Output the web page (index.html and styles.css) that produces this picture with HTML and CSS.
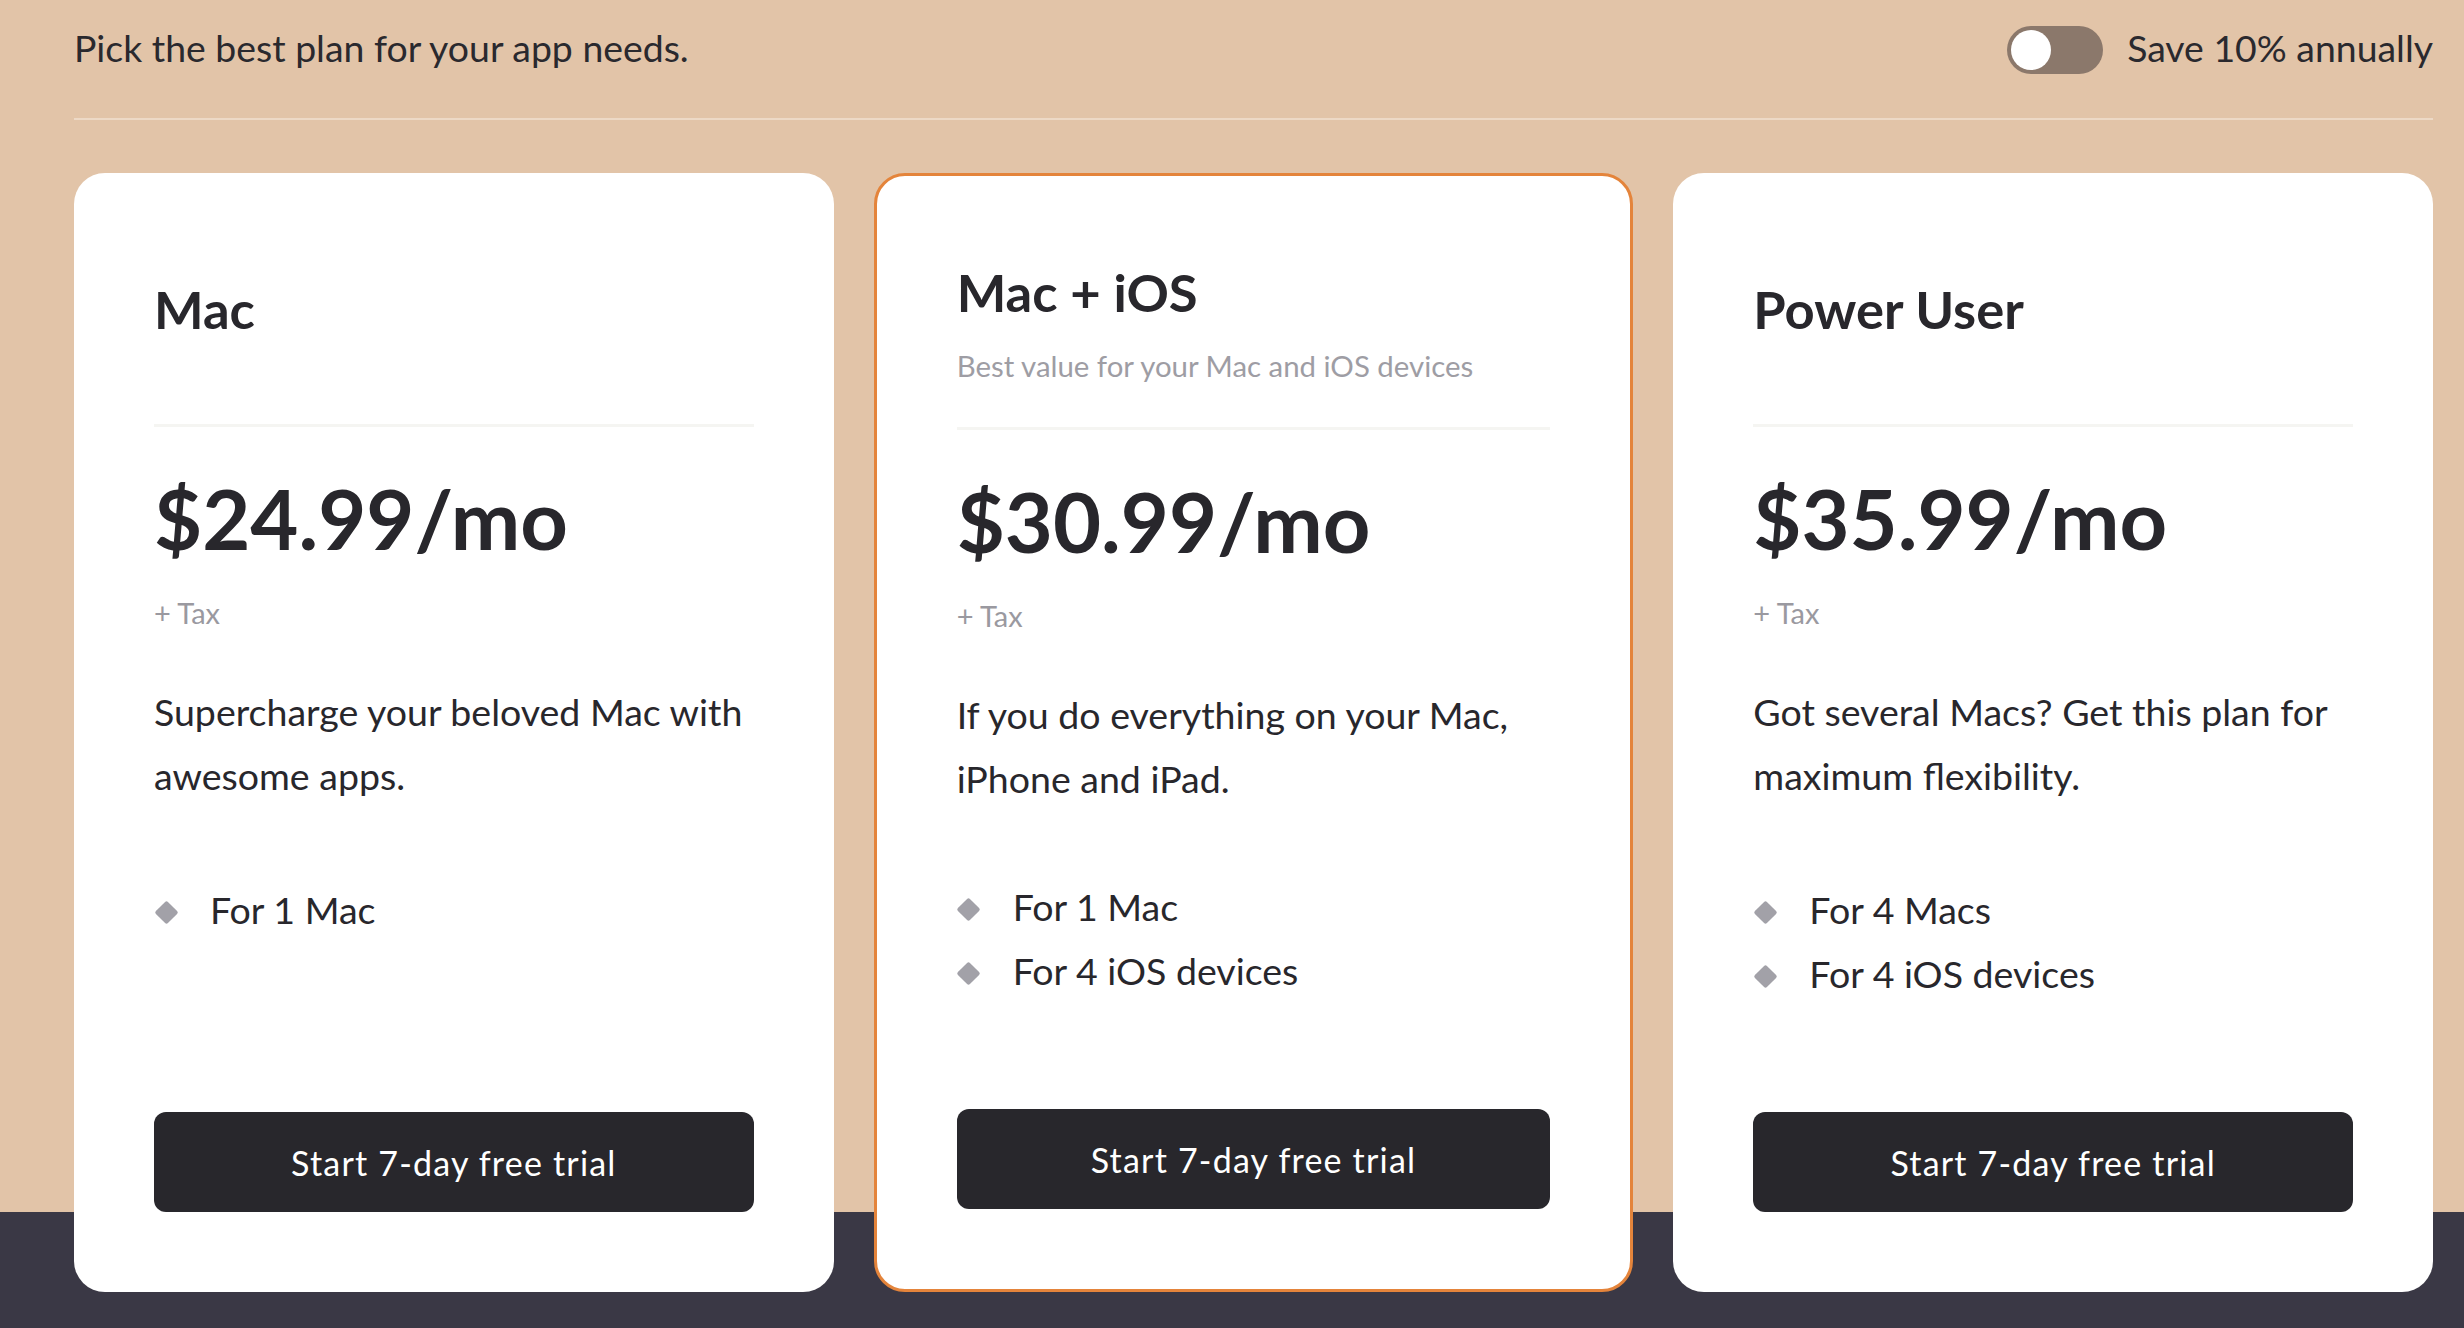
FILE: index.html
```html
<!DOCTYPE html>
<html lang="en">
<head>
<meta charset="utf-8">
<title>Plans</title>
<link rel="stylesheet" href="styles.css">
</head>
<body>
<div class="page">
  <header class="top">
    <p class="lead">Pick the best plan for your app needs.</p>
    <div class="billing">
      <span class="switch" role="switch" aria-checked="false"><span class="knob"></span></span>
      <span class="billing-label">Save 10% annually</span>
    </div>
  </header>

  <section class="plans">
    <article class="card">
      <div class="card-head">
        <h2 class="plan-name">Mac</h2>
      </div>
      <div class="rule"></div>
      <div class="price">$24.99/mo</div>
      <div class="tax">+ Tax</div>
      <p class="desc">Supercharge your beloved Mac with awesome apps.</p>
      <ul class="features">
        <li>For 1 Mac</li>
      </ul>
      <button class="cta" type="button">Start 7-day free trial</button>
    </article>

    <article class="card featured">
      <div class="card-head">
        <h2 class="plan-name">Mac + iOS</h2>
        <p class="plan-sub">Best value for your Mac and iOS devices</p>
      </div>
      <div class="rule"></div>
      <div class="price">$30.99/mo</div>
      <div class="tax">+ Tax</div>
      <p class="desc">If you do everything on your Mac, iPhone and iPad.</p>
      <ul class="features">
        <li>For 1 Mac</li>
        <li>For 4 iOS devices</li>
      </ul>
      <button class="cta" type="button">Start 7-day free trial</button>
    </article>

    <article class="card">
      <div class="card-head">
        <h2 class="plan-name">Power User</h2>
      </div>
      <div class="rule"></div>
      <div class="price">$35.99/mo</div>
      <div class="tax">+ Tax</div>
      <p class="desc">Got several Macs? Get this plan for maximum flexibility.</p>
      <ul class="features">
        <li>For 4 Macs</li>
        <li>For 4 iOS devices</li>
      </ul>
      <button class="cta" type="button">Start 7-day free trial</button>
    </article>
  </section>
</div>
</body>
</html>
```
FILE: styles.css
```css
* {
  box-sizing: border-box;
}

html, body {
  margin: 0;
  padding: 0;
}

body {
  font-family: "Lato", "Noto Sans", sans-serif;
  color: #28272c;
  background: #3a3845;
}

.page {
  min-height: 1328px;
  padding: 0 31px 0 74px;
  background: linear-gradient(to bottom, #e2c4a8 0, #e2c4a8 1212px, #3a3845 1212px, #3a3845 100%);
}

/* ---------- header ---------- */
.top {
  display: flex;
  align-items: center;
  justify-content: space-between;
  padding-top: 26px;
  padding-bottom: 44px;
  border-bottom: 2px solid #edd9c6;
}

.lead,
.billing-label {
  margin: 0;
  font-size: 37.4px;
  line-height: 44px;
  padding-bottom: 4px;
  color: #2a292e;
}

.billing {
  display: flex;
  align-items: center;
  gap: 24px;
  height: 48px;
}

.switch {
  display: flex;
  align-items: center;
  width: 96px;
  height: 48px;
  padding: 4px;
  border-radius: 24px;
  background: #8b786b;
}

.knob {
  width: 40px;
  height: 40px;
  border-radius: 50%;
  background: #fff;
}

/* ---------- plans ---------- */
.plans {
  display: grid;
  grid-template-columns: repeat(3, 1fr);
  gap: 40px;
  margin-top: 53px;
}

.card {
  display: flex;
  flex-direction: column;
  min-height: 1119px;
  padding: 80px;
  background: #fff;
  border-radius: 31px;
}

.card.featured {
  border: 3px solid #e4843b;
}

.card-head {
  height: 171px;
}

.plan-name {
  margin: 25px 0 0;
  font-size: 52.5px;
  line-height: 62px;
  font-weight: 700;
  color: #28272c;
}

.featured .plan-name {
  margin-top: 5px;
}

.plan-sub {
  margin: 23px 0 0;
  font-size: 29.4px;
  line-height: 40px;
  color: #9e9da4;
}

.rule {
  height: 3px;
  background: #f5f5f2;
}

.price {
  margin-top: 50px;
  font-size: 83px;
  line-height: 82px;
  font-weight: 700;
  color: #28272c;
}

.tax {
  margin-top: 37px;
  font-size: 29px;
  line-height: 34px;
  color: #9a99a0;
}

.desc {
  margin: 50px 0 0;
  font-size: 37.5px;
  line-height: 64px;
  color: #28272c;
}

.features {
  list-style: none;
  margin: 70px 0 0;
  padding: 0;
}

.featured .features {
  margin-top: 64px;
}

.features li {
  display: flex;
  align-items: center;
  font-size: 37.5px;
  line-height: 64px;
  color: #28272c;
}

.features li::before {
  content: "";
  flex: none;
  width: 17px;
  height: 17px;
  margin: 4px 35.5px 0 3.5px;
  border-radius: 2px;
  background: #a2a1a8;
  transform: rotate(45deg);
}

.cta {
  margin-top: auto;
  width: 100%;
  height: 100px;
  border: 0;
  border-radius: 12px;
  background: #28272c;
  color: #fff;
  font-family: "Lato", "Noto Sans", sans-serif;
  font-size: 34px;
  letter-spacing: 1.2px;
  cursor: pointer;
}
```
